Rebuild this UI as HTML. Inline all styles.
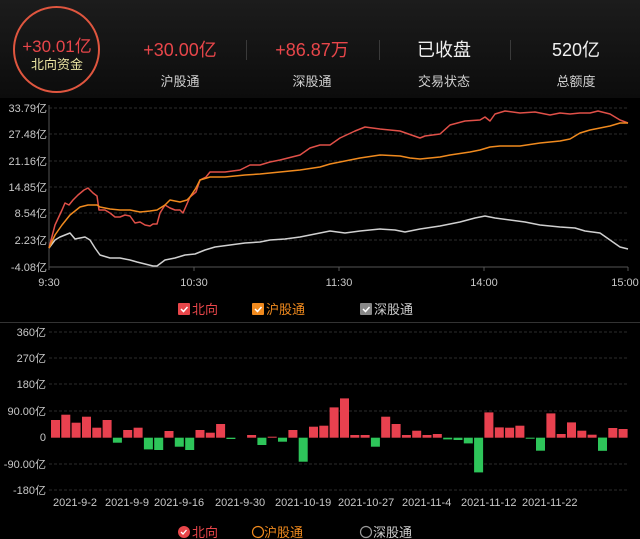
<!DOCTYPE html>
<html><head><meta charset="utf-8">
<style>
html,body{margin:0;padding:0;background:#000;}
body{width:640px;height:539px;overflow:hidden;position:relative;font-family:"Liberation Sans","Noto Sans CJK SC",sans-serif;}
.hdr{position:absolute;left:0;top:0;width:640px;height:98px;background:linear-gradient(#1c1c1c,#0c0c0c);}
.t{position:absolute;white-space:nowrap;transform:translateX(-50%);}
.v{font-size:18px;color:#e8464a;top:36px;}
.l{font-size:13px;color:#d0d0d0;top:71px;}
.sep{position:absolute;top:40px;width:1px;height:20px;background:#3a3a3a;}
svg{position:absolute;left:0;top:0;}
</style></head><body>
<div class="hdr"></div>
<div style="position:absolute;left:13px;top:6px;width:83px;height:83px;border:2.5px solid #e0563f;border-radius:50%;"></div>
<div class="t" style="left:57px;top:32px;font-size:17px;color:#e8464a;">+30.01亿</div>
<div class="t" style="left:57px;top:54px;font-size:13px;color:#e8e2a0;">北向资金</div>
<div class="t v" style="left:180px;">+30.00亿</div>
<div class="t v" style="left:312px;">+86.87万</div>
<div class="t v" style="left:444px;color:#f0f0f0;">已收盘</div>
<div class="t v" style="left:576px;color:#f0f0f0;">520亿</div>
<div class="t l" style="left:180px;">沪股通</div>
<div class="t l" style="left:312px;">深股通</div>
<div class="t l" style="left:444px;">交易状态</div>
<div class="t l" style="left:576px;">总额度</div>
<div class="sep" style="left:246px"></div>
<div class="sep" style="left:379px"></div>
<div class="sep" style="left:510px"></div>

<svg width="640" height="539" font-family="Liberation Sans, Noto Sans CJK SC, sans-serif">
<g stroke="#2c2c2c" stroke-dasharray="3,2" stroke-width="1">
<line x1="49" x2="628" y1="108" y2="108"/><line x1="49" x2="628" y1="134" y2="134"/><line x1="49" x2="628" y1="161" y2="161"/><line x1="49" x2="628" y1="187" y2="187"/><line x1="49" x2="628" y1="213" y2="213"/><line x1="49" x2="628" y1="240" y2="240"/>
</g>
<line x1="49" x2="49" y1="105" y2="270" stroke="#555"/>
<line x1="49" x2="628" y1="267" y2="267" stroke="#555"/>
<g stroke="#555"><line x1="194" x2="194" y1="267" y2="271"/><line x1="339" x2="339" y1="267" y2="271"/><line x1="484" x2="484" y1="267" y2="271"/><line x1="628" x2="628" y1="267" y2="271"/></g>
<g font-size="11" fill="#c8c8c8" text-anchor="end">
<text x="47" y="112">33.79亿</text><text x="47" y="138">27.48亿</text><text x="47" y="165">21.16亿</text><text x="47" y="191">14.85亿</text><text x="47" y="217">8.54亿</text><text x="47" y="244">2.23亿</text><text x="47" y="271">-4.08亿</text>
</g>
<g font-size="11" fill="#c8c8c8" text-anchor="middle">
<text x="49" y="286">9:30</text><text x="194" y="286">10:30</text><text x="339" y="286">11:30</text><text x="484" y="286">14:00</text><text x="625" y="286">15:00</text>
</g>
<g fill="none" stroke-width="1.5" stroke-linejoin="round">
<polyline stroke="#d0d0d0" points="49,248 55,240 60,237 65,235 70,233 75,239 80,238 85,237 90,240 95,248 100,255 110,258 120,258 130,260 137,262 145,264 153,266 157,266 165,260 175,258 185,255 195,254 205,250 215,247 230,245 245,243 260,242 270,240 285,239 300,237 315,234 330,231 345,233 360,231 380,229 395,230 405,232 420,229 440,226 460,222 475,218 485,216 495,218 510,220 525,222 540,225 560,227 575,228 585,231 600,233 610,240 620,247 628,249"/>
<polyline stroke="#e05048" points="49,248 55,225 62,210 65,203 69,205 73,200 78,195 84,190 88,188 93,193 97,196 99,210 105,210 110,213 115,217 120,217 125,215 130,216 135,223 140,222 145,225 150,226 153,224 157,224 160,213 165,205 170,208 175,210 180,210 183,213 190,197 196,192 200,180 206,177 210,172 216,172 225,172 240,170 250,165 260,165 270,162 280,160 300,155 310,148 320,145 330,145 340,138 355,131 365,127 380,129 400,131 420,138 425,136 440,134 450,125 465,121 480,120 485,117 490,121 495,114 505,111 520,113 535,112 550,115 560,113 570,114 580,113 590,113 598,111 610,114 620,120 628,123"/>
<polyline stroke="#f08a1e" points="49,248 55,235 62,225 70,215 80,207 88,205 97,205 100,207 110,209 120,210 130,210 140,212 150,211 157,210 165,205 170,200 180,202 187,200 190,197 196,188 200,180 210,177 225,177 245,175 260,174 280,172 300,170 320,167 330,164 360,158 380,155 400,156 410,158 420,159 440,157 450,155 470,152 480,150 490,147 500,146 520,146 540,143 560,141 570,139 580,133 590,130 610,126 620,123 628,123"/>
</g>
<!-- top legend -->
<rect x="178" y="303" width="12" height="12" rx="1" fill="#e8464a"/><path d="M181 309 l2.5 2.5 l4 -4.5" stroke="#fff" stroke-width="1.5" fill="none"/>
<text x="192" y="314" font-size="13" fill="#e8464a">北向</text>
<rect x="252" y="303" width="12" height="12" rx="1" fill="#f08a1e"/><path d="M255 309 l2.5 2.5 l4 -4.5" stroke="#fff" stroke-width="1.5" fill="none"/>
<text x="266" y="314" font-size="13" fill="#f08a1e">沪股通</text>
<rect x="360" y="303" width="12" height="12" rx="1" fill="#888"/><path d="M363 309 l2.5 2.5 l4 -4.5" stroke="#fff" stroke-width="1.5" fill="none"/>
<text x="374" y="314" font-size="13" fill="#ccc">深股通</text>
<line x1="0" x2="640" y1="322.5" y2="322.5" stroke="#333"/>
<!-- bottom chart -->
<g stroke="#2c2c2c" stroke-dasharray="3,2">
<line x1="49" x2="628" y1="332" y2="332"/><line x1="49" x2="628" y1="358" y2="358"/><line x1="49" x2="628" y1="384" y2="384"/><line x1="49" x2="628" y1="411" y2="411"/><line x1="49" x2="628" y1="464" y2="464"/><line x1="49" x2="628" y1="490" y2="490"/>
</g>
<g font-size="11" fill="#c8c8c8" text-anchor="end">
<text x="46" y="336">360亿</text><text x="46" y="362">270亿</text><text x="46" y="388">180亿</text><text x="46" y="415">90.00亿</text><text x="46" y="441">0</text><text x="46" y="468">-90.00亿</text><text x="46" y="494">-180亿</text>
</g>
<g fill="#e8414f">
<rect x="51" y="420" width="9" height="17.7"/><rect x="61.3" y="414.7" width="9" height="23"/><rect x="71.6" y="422.7" width="9" height="15"/><rect x="82" y="416.7" width="9" height="21"/><rect x="92.3" y="427.7" width="9" height="10"/><rect x="102.6" y="420" width="9" height="17.7"/>
<rect x="123.2" y="430" width="9" height="7.7"/><rect x="133.6" y="427.7" width="9" height="10"/><rect x="164.5" y="431" width="9" height="6.7"/><rect x="195.5" y="430" width="9" height="7.7"/><rect x="205.8" y="432.7" width="9" height="5"/><rect x="216.1" y="424" width="9" height="13.7"/>
<rect x="247.1" y="435" width="9" height="2.7"/><rect x="267.7" y="436.7" width="9" height="1"/><rect x="288.4" y="430" width="9" height="7.7"/><rect x="309" y="426.7" width="9" height="11"/><rect x="319.3" y="425.7" width="9" height="12"/><rect x="329.6" y="407.4" width="9" height="30.3"/><rect x="340" y="398.4" width="9" height="39.3"/><rect x="350.3" y="435" width="9" height="2.7"/><rect x="360.6" y="435" width="9" height="2.7"/>
<rect x="381.2" y="416.7" width="9" height="21"/><rect x="391.6" y="424" width="9" height="13.7"/><rect x="401.9" y="435" width="9" height="2.7"/><rect x="412.2" y="430.7" width="9" height="7"/><rect x="422.5" y="435" width="9" height="2.7"/><rect x="432.8" y="434" width="9" height="3.7"/>
<rect x="484.4" y="412.4" width="9" height="25.3"/><rect x="494.8" y="427.4" width="9" height="10.3"/><rect x="505.1" y="427.7" width="9" height="10"/><rect x="515.4" y="425.7" width="9" height="12"/><rect x="546.4" y="413.4" width="9" height="24.3"/><rect x="556.7" y="434" width="9" height="3.7"/><rect x="567" y="422.4" width="9" height="15.3"/><rect x="577.3" y="430.7" width="9" height="7"/><rect x="587.6" y="434.7" width="9" height="3"/><rect x="608.3" y="428" width="9" height="9.7"/><rect x="618.6" y="429" width="9" height="8.7"/>
</g>
<g fill="#2ec55a">
<rect x="112.9" y="437.7" width="9" height="5"/><rect x="143.9" y="437.7" width="9" height="11.7"/><rect x="154.2" y="437.7" width="9" height="12.3"/><rect x="174.8" y="437.7" width="9" height="9"/><rect x="185.2" y="437.7" width="9" height="12.3"/><rect x="226.4" y="437.7" width="9" height="1.3"/><rect x="257.4" y="437.7" width="9" height="7.3"/><rect x="278" y="437.7" width="9" height="4"/><rect x="298.7" y="437.7" width="9" height="24"/><rect x="370.9" y="437.7" width="9" height="9"/><rect x="443.2" y="437.7" width="9" height="1.7"/><rect x="453.5" y="437.7" width="9" height="2.3"/><rect x="463.8" y="437.7" width="9" height="5.7"/><rect x="474.1" y="437.7" width="9" height="34.7"/><rect x="525.7" y="437.7" width="9" height="1"/><rect x="536" y="437.7" width="9" height="13"/><rect x="598" y="437.7" width="9" height="13"/><rect x="608.3" y="437.7" width="0" height="0"/><rect x="608.3" y="437.7" width="0" height="0"/><rect x="598" y="437.7" width="0" height="0"/>
</g>
<rect x="598" y="437.7" width="9" height="13" fill="#2ec55a"/>
<g font-size="11" fill="#c8c8c8">
<text x="53" y="506">2021-9-2</text><text x="105" y="506">2021-9-9</text><text x="154" y="506">2021-9-16</text><text x="215" y="506">2021-9-30</text><text x="275" y="506">2021-10-19</text><text x="338" y="506">2021-10-27</text><text x="402" y="506">2021-11-4</text><text x="461" y="506">2021-11-12</text><text x="522" y="506">2021-11-22</text>
</g>
<!-- bottom legend -->
<circle cx="184" cy="532" r="6" fill="#e8464a"/><path d="M181 532 l2 2 l3.5 -4" stroke="#fff" stroke-width="1.3" fill="none"/>
<text x="192" y="537" font-size="13" fill="#e8464a">北向</text>
<circle cx="258" cy="532" r="5.5" fill="none" stroke="#f08a1e" stroke-width="1.2"/>
<text x="264" y="537" font-size="13" fill="#f08a1e">沪股通</text>
<circle cx="366" cy="532" r="5.5" fill="none" stroke="#999" stroke-width="1.2"/>
<text x="373" y="537" font-size="13" fill="#ccc">深股通</text>
</svg>
</body></html>
